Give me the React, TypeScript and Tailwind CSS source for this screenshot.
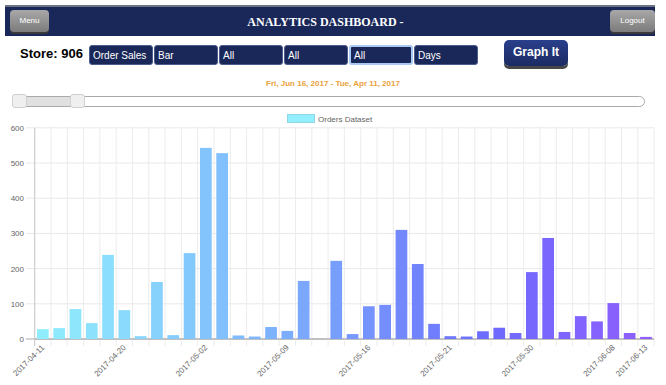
import React from 'react';

// valores aproximados de la gráfica (pedidos por día)
const values = [
  28, 31, 85, 45, 239, 82, 8, 162, 11, 244, 543, 528, 10, 7, 34, 23, 165, 0, 222,
  14, 93, 97, 310, 213, 43, 8, 7, 22, 32, 17, 190, 287, 20, 65, 50, 102, 17, 6,
];

const labels: Record<number, string> = {
  0: '2017-04-11',
  5: '2017-04-20',
  10: '2017-05-02',
  15: '2017-05-09',
  20: '2017-05-16',
  25: '2017-05-21',
  30: '2017-05-30',
  35: '2017-06-08',
  37: '2017-06-13',
};

const X0 = 34.7;
const STEP = 16.3;
const BASE = 230;
const SCALE = 0.352;

const barColor = (i: number) => {
  const t = i / (values.length - 1);
  const h = 189 + t * 70;
  const l = 78 - t * 10;
  return `hsl(${h}, 97%, ${l}%)`;
};

const selects = ['Order Sales', 'Bar', 'All', 'All', 'All', 'Days'];

const Chart = () => (
  <svg width="666" height="277" className="block mt-[2px]" style={{ fontFamily: '"Liberation Sans", Arial, sans-serif' }}>
    {/* leyenda */}
    <rect x="287.5" y="5.5" width="27" height="8" fill="#93eefe" stroke="#8fd6e6" />
    <text x="318" y="12.5" fontSize="8" fill="#666">Orders Dataset</text>

    {/* rejilla horizontal */}
    {[0, 100, 200, 300, 400, 500, 600].map((v) => {
      const y = BASE - v * SCALE;
      return (
        <g key={v}>
          <line x1="26" x2="654" y1={y} y2={y} stroke={v === 0 ? '#aaa' : '#e8e8e8'} strokeWidth="1" />
          <text x="24" y={y + 3} fontSize="8" fill="#666" textAnchor="end">{v}</text>
        </g>
      );
    })}

    {/* rejilla vertical */}
    {Array.from({ length: values.length + 1 }).map((_, i) => {
      const x = X0 + i * STEP;
      return <line key={i} x1={x} x2={x} y1={BASE - 600 * SCALE} y2={BASE + 7} stroke="#ececec" strokeWidth="1" />;
    })}
    <line x1={X0} x2={X0} y1={BASE - 600 * SCALE} y2={BASE + 7} stroke="#c8c8c8" strokeWidth="1" />
    <line x1={X0} x2="654" y1={BASE} y2={BASE} stroke="#aaa" strokeWidth="1" />

    {/* barras */}
    {values.map((v, i) => {
      const h = v * SCALE;
      return (
        <rect
          key={i}
          x={X0 + i * STEP + 2.3}
          y={BASE - h}
          width="11.7"
          height={h}
          fill={barColor(i)}
        />
      );
    })}

    {/* etiquetas del eje x */}
    {Object.entries(labels).map(([k, text]) => {
      const x = X0 + Number(k) * STEP + STEP / 2 + 2;
      const y = BASE + 9;
      return (
        <text
          key={k}
          x={x}
          y={y}
          fontSize="8"
          fill="#666"
          textAnchor="end"
          transform={`rotate(-45 ${x} ${y})`}
        >
          {text}
        </text>
      );
    })}
  </svg>
);

export default function App() {
  return (
    <div className="w-[666px] h-[385px] bg-white overflow-hidden font-['Liberation_Sans',Arial,sans-serif]">
      {/* barra superior */}
      <div className="mt-[5px] ml-[5px] w-[650px] h-[31px] bg-[#1a2859] border-t-2 border-[#6e7384] flex items-center pl-[5px]">
        <button className="w-[39px] h-[22px] mb-[2px] rounded-[4px] bg-gradient-to-b from-[#a8a8a8] to-[#7c7c7c] text-white text-[8px] shadow-[0_2px_0_#3a3a3a]">
          Menu
        </button>
        <div className="flex-1 pr-[8px] text-center text-white font-bold text-[12px] font-['Liberation_Serif',serif]">
          ANALYTICS DASHBOARD -
        </div>
        <button className="w-[45px] h-[22px] mb-[2px] rounded-[4px] bg-gradient-to-b from-[#a8a8a8] to-[#7c7c7c] text-white text-[8px] shadow-[0_2px_0_#3a3a3a]">
          Logout
        </button>
      </div>

      {/* controles */}
      <div className="flex items-center h-[30px] mt-[3px] pl-[20px]">
        <span className="w-[69px] text-[13px] font-bold text-black">Store: 906</span>
        <div className="flex gap-[1px] mt-[2px]">
          {selects.map((s, i) => (
            <div
              key={i}
              className={`w-[64px] h-[20px] flex items-center pl-[3px] rounded-[3px] bg-[#1a2859] text-white text-[10px] ${
                i === 4 ? 'border-2 border-[#a9c9f2]' : 'border border-[#4c5c8c]'
              }`}
            >
              {s}
            </div>
          ))}
        </div>
        <button className="ml-[26px] mb-[2px] w-[64px] h-[26px] rounded-[5px] bg-gradient-to-b from-[#2a3f8c] to-[#1b2b63] text-white text-[12px] font-bold shadow-[0_3px_0_#474747] flex items-center justify-center pb-[3px]">
          Graph It
        </button>
      </div>

      {/* rango de fechas */}
      <div className="text-center text-[8px] font-bold text-[#e9a23b] mt-[10px] leading-[10px]">
        Fri, Jun 16, 2017 - Tue, Apr 11, 2017
      </div>

      {/* slider */}
      <div className="relative ml-[12px] w-[633px] h-[11px] mt-[7px] rounded-full border border-[#aaa] bg-white">
        <div className="absolute left-[2px] top-0 w-[64px] h-full bg-[#e0e0e0]" />
        <div className="absolute left-[-1px] top-[-3px] w-[15px] h-[14px] rounded-[3px] bg-[#efefef] border border-[#d0d0d0]" />
        <div className="absolute left-[57px] top-[-3px] w-[15px] h-[14px] rounded-[3px] bg-[#efefef] border border-[#d0d0d0]" />
      </div>

      <Chart />
    </div>
  );
}
